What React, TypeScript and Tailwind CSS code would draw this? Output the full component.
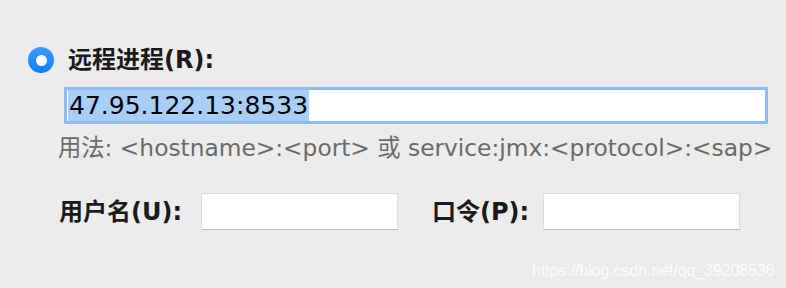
export default function App() {
  const sans = { fontFamily: '"DejaVu Sans", "Noto Sans CJK SC", sans-serif' };

  return (
    <div className="relative w-[786px] h-[288px] bg-[#ececec] overflow-hidden" style={sans}>
      <div className="flex flex-col pt-[47px]">
        {/* Radio + label */}
        <div className="flex items-center h-[26px] pl-[28px]">
          <span className="w-[26px] h-[26px] rounded-full bg-gradient-to-b from-[#3a9cff] to-[#0b7dfb] flex items-center justify-center">
            <span className="w-[11px] h-[11px] rounded-full bg-white" />
          </span>
          <span className="ml-[14px] text-[24px] font-bold text-[#1a1a1a] leading-none whitespace-nowrap">
            远程进程(R):
          </span>
        </div>

        {/* Host field */}
        <div className="ml-[64px] mt-[14px] w-[704px] h-[37px] border-[3px] border-[#8cbcf2] bg-white flex items-center pl-[1px]">
          <span className="bg-[#a8cefa] text-[25px] leading-[31px] text-black px-[1px] whitespace-nowrap">
            47.95.122.13:8533
          </span>
        </div>

        {/* Usage hint */}
        <div className="ml-[58px] mt-[10px] text-[23.3px] leading-[28px] text-[#6a6a6a] whitespace-nowrap">
          用法: &lt;hostname&gt;:&lt;port&gt; 或 service:jmx:&lt;protocol&gt;:&lt;sap&gt;
        </div>

        {/* Credentials */}
        <div className="flex items-center mt-[31px] h-[37px]">
          <span className="ml-[59px] w-[142px] text-[24px] font-bold text-[#1a1a1a] whitespace-nowrap">
            用户名(U):
          </span>
          <div className="w-[197px] h-[37px] bg-white border border-[#dcdcdc] border-b-[#bdbdbd]" />
          <span className="ml-[34px] w-[111px] text-[24px] font-bold text-[#1a1a1a] whitespace-nowrap">
            口令(P):
          </span>
          <div className="w-[197px] h-[37px] bg-white border border-[#dcdcdc] border-b-[#bdbdbd]" />
        </div>
      </div>

      {/* Watermark */}
      <div
        className="absolute left-[532px] top-[259px] text-[15.8px] text-white/80 whitespace-nowrap"
        style={{ fontFamily: '"Liberation Sans", sans-serif' }}
      >
        https://blog.csdn.net/qq_39208536
      </div>
    </div>
  );
}
